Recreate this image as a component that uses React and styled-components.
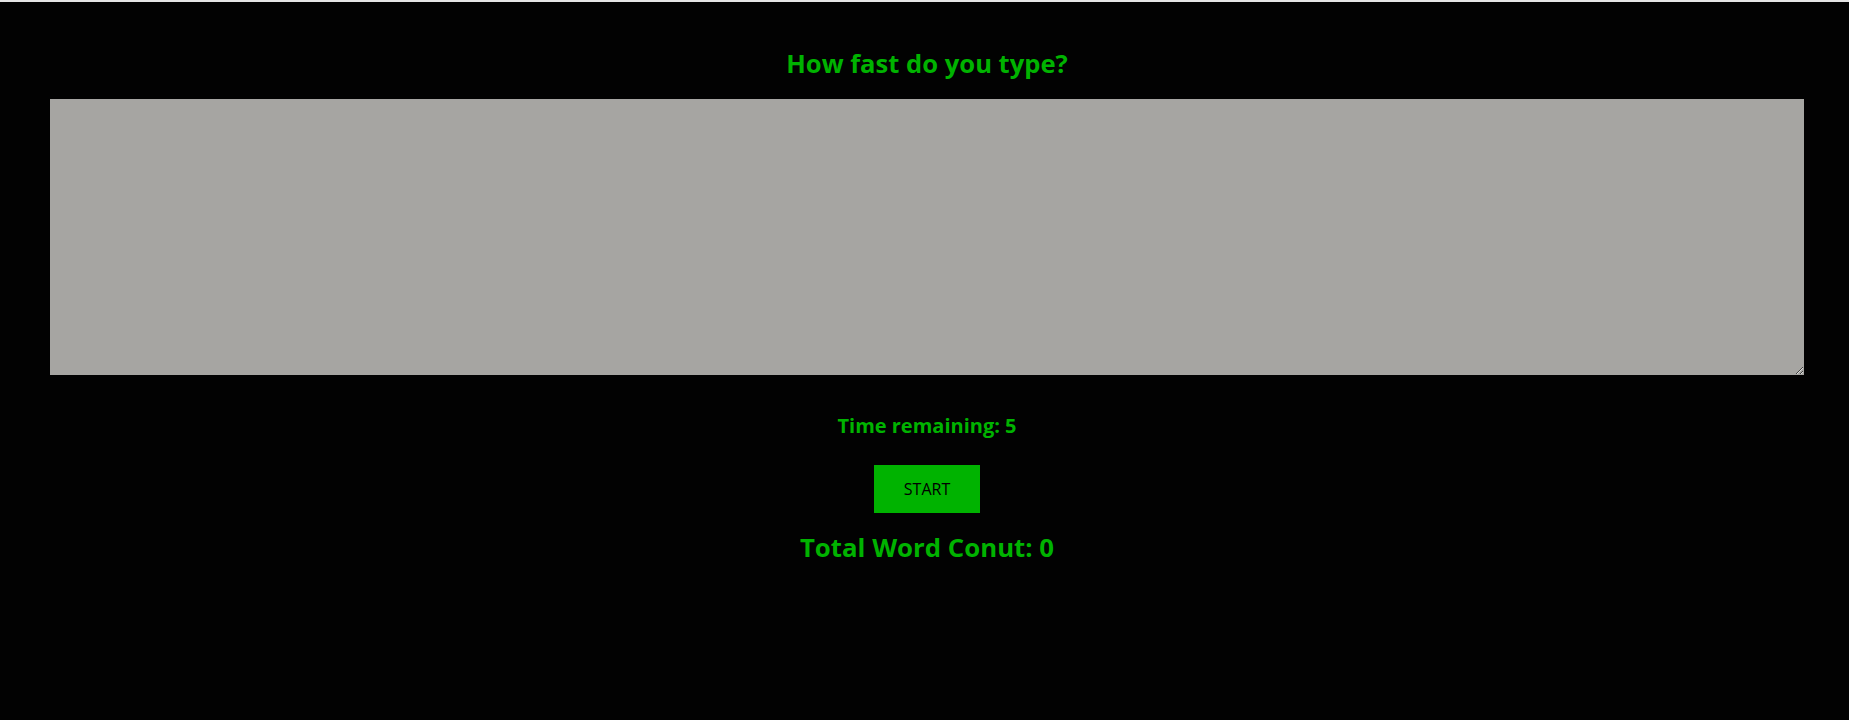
import styled, { createGlobalStyle } from 'styled-components'

const GlobalStyle = createGlobalStyle`
  html, body {
    margin: 0;
    padding: 0;
    background: #020202;
  }
  body {
    font-family: "Comic Sans MS", "Open Sans", sans-serif;
  }
`

const Page = styled.div`
  min-height: 720px;
  box-sizing: border-box;
  background: #020202;
  border-top: 2px solid #e4e4e4;
  padding: 0 45px 0 50px;
  display: flex;
  flex-direction: column;
  align-items: center;
  color: #00b300;
`

const Title = styled.h2`
  margin: 45px 0 18px;
  font-size: 25.6px;
  line-height: 34px;
  font-weight: 700;
`

const TypingArea = styled.textarea`
  display: block;
  box-sizing: border-box;
  width: 100%;
  height: 276px;
  margin: 0;
  border: none;
  outline: none;
  background: #a6a5a2;
  font-family: inherit;
  font-size: 18px;
`

const TimeLeft = styled.h3`
  margin: 38px 0 0;
  font-size: 20px;
  line-height: 26px;
  font-weight: 700;
`

const StartButton = styled.button`
  margin-top: 26px;
  width: 106px;
  height: 48px;
  border: none;
  background: #00b300;
  color: #000;
  font-family: inherit;
  font-size: 16px;
  cursor: pointer;
`

const WordCount = styled.h2`
  margin: 17px 0 0;
  font-size: 25.8px;
  line-height: 34px;
  font-weight: 700;
`

export default function App() {
  return (
    <>
      <GlobalStyle />
      <Page>
        <Title>How fast do you type?</Title>
        <TypingArea />
        <TimeLeft>Time remaining: 5</TimeLeft>
        <StartButton>START</StartButton>
        <WordCount>Total Word Conut: 0</WordCount>
      </Page>
    </>
  )
}
